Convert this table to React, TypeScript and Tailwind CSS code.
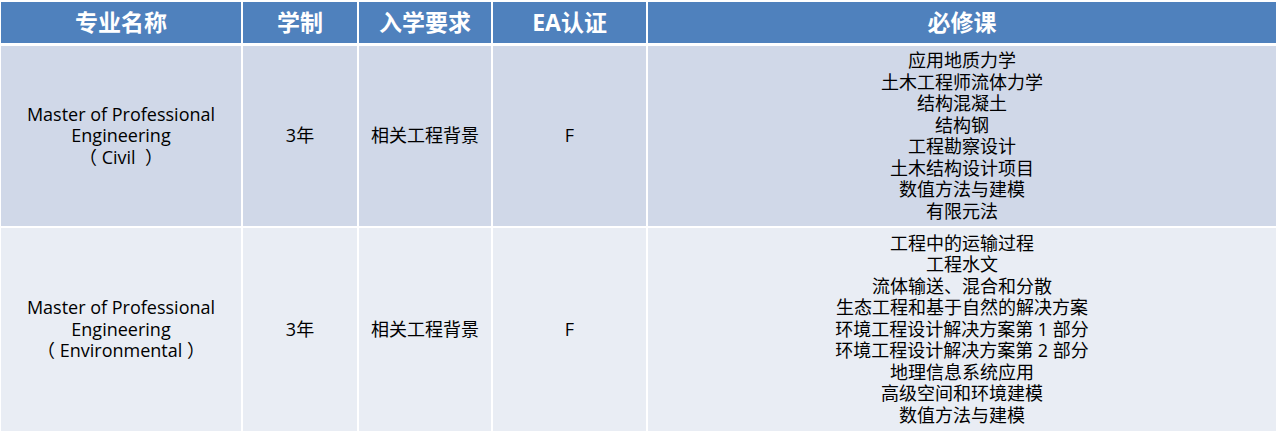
import React from "react";

const font = { fontFamily: '"Open Sans", "Noto Sans CJK SC", sans-serif' };

const rows = [
  {
    name: ["Master of Professional", "Engineering", "（ Civil\u00a0 ）"],
    years: "3年",
    entry: "相关工程背景",
    ea: "F",
    courses: [
      "应用地质力学",
      "土木工程师流体力学",
      "结构混凝土",
      "结构钢",
      "工程勘察设计",
      "土木结构设计项目",
      "数值方法与建模",
      "有限元法",
    ],
    bg: "bg-[#d0d8e8]",
    h: "h-[180px]",
  },
  {
    name: ["Master of Professional", "Engineering", "（ Environmental ）"],
    years: "3年",
    entry: "相关工程背景",
    ea: "F",
    courses: [
      "工程中的运输过程",
      "工程水文",
      "流体输送、混合和分散",
      "生态工程和基于自然的解决方案",
      "环境工程设计解决方案第 1 部分",
      "环境工程设计解决方案第 2 部分",
      "地理信息系统应用",
      "高级空间和环境建模",
      "数值方法与建模",
    ],
    bg: "bg-[#e9edf4]",
    h: "h-[203px]",
  },
];

const cols = "grid grid-cols-[240px_114px_132px_153px_628px] gap-x-[2px]";

const App = () => {
  return (
    <div className="w-[1280px] h-[437px] bg-white pt-[2px] pl-[1px]" style={font}>
      {/* header */}
      <div className={`${cols} h-[41px]`}>
        {["专业名称", "学制", "入学要求", "EA认证", "必修课"].map((t) => (
          <div
            key={t}
            className="bg-[#4f81bd] text-white font-bold text-[23px] flex items-center justify-center"
          >
            {t}
          </div>
        ))}
      </div>

      <div className="flex flex-col gap-y-[2px] mt-[3px]">
        {rows.map((r, i) => (
          <div key={i} className={`${cols} ${r.h} text-[18px] leading-[21.5px] text-black`}>
            <div className={`${r.bg} flex flex-col items-center justify-center text-center`}>
              {r.name.map((n) => (
                <div key={n}>{n}</div>
              ))}
            </div>
            <div className={`${r.bg} flex items-center justify-center`}>{r.years}</div>
            <div className={`${r.bg} flex items-center justify-center`}>{r.entry}</div>
            <div className={`${r.bg} flex items-center justify-center`}>{r.ea}</div>
            <div className={`${r.bg} flex flex-col items-center justify-center text-center`}>
              {r.courses.map((c) => (
                <div key={c}>{c}</div>
              ))}
            </div>
          </div>
        ))}
      </div>
    </div>
  );
};

export default App;
